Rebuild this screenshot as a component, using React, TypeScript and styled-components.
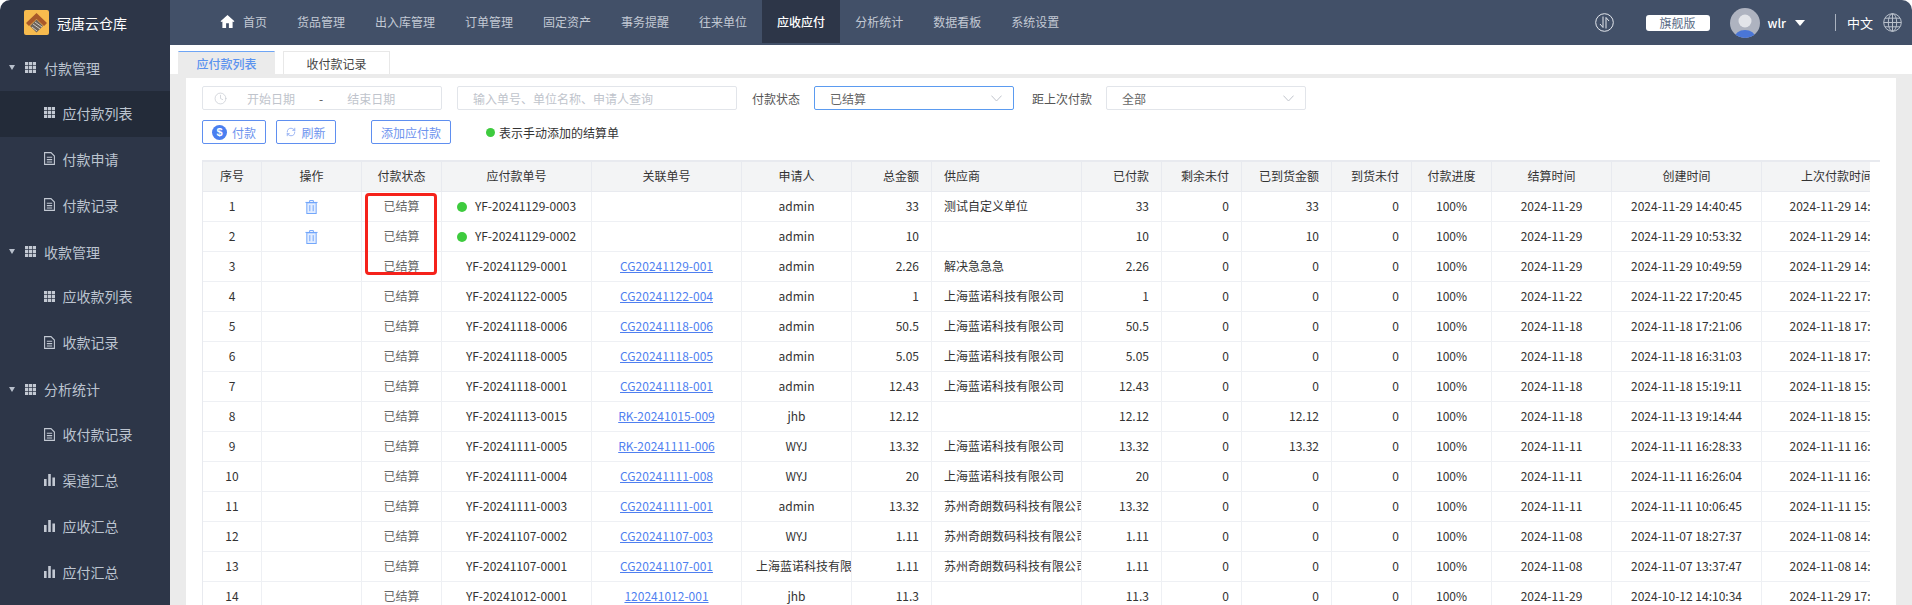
import { Fragment } from 'react'
import { Clock, RefreshCw } from 'lucide-react'
import styled, { createGlobalStyle } from 'styled-components'

const GlobalStyle = createGlobalStyle`
  html, body {
    margin: 0;
    height: 100%;
    background: #fff;
  }
  * {
    box-sizing: border-box;
  }
  body {
    font-family: "Noto Sans CJK SC", "Noto Sans", sans-serif;
    font-size: 12px;
    color: #333;
  }
`

const Trash = () => (
  <svg width="13" height="14" viewBox="0 0 13 15">
    <rect x="1.5" y="3" width="10" height="11.5" fill="#e3edff" stroke="#6aa1fb" />
    <path d="M0 2.6h13M4.5 2.5V.6h4v1.9M4.7 5.5v6.5M8.3 5.5v6.5" stroke="#6aa1fb" fill="none" />
  </svg>
)

const GridIcon = () => (
  <svg width="11" height="11" viewBox="0 0 11 11" fill="#c3c9d3">
    {[0, 3.9, 7.8].map((y) =>
      [0, 3.9, 7.8].map((x) => <rect key={`${x}-${y}`} x={x} y={y} width="3.2" height="3.2" />),
    )}
  </svg>
)

const DocIcon = () => (
  <svg width="11" height="13" viewBox="0 0 11 13" fill="none" stroke="#c3c9d3" strokeWidth="1.1">
    <path d="M.6.6h6.4l3.4 3.4v8.4H.6z" />
    <path d="M2.8 5.2h5.4M2.8 7.6h5.4M2.8 10h5.4" />
  </svg>
)

const BarsIcon = () => (
  <svg width="11" height="12" viewBox="0 0 11 12" fill="#c3c9d3">
    <rect x="0" y="5" width="2.6" height="7" />
    <rect x="4.2" y="0" width="2.6" height="12" />
    <rect x="8.4" y="3.5" width="2.6" height="8.5" />
  </svg>
)

const Logo = () => (
  <svg width="25" height="25" viewBox="0 0 25 25">
    <rect width="25" height="25" rx="2" fill="#f7bb4e" />
    <path d="M12.5 3 23 13l-3 3-7.5-7-7.5 7-3-3z" fill="#a9592a" />
    <path d="M12.5 9.5 19 16l-6.5 6.5L6 16z" fill="#6b625b" />
    <path d="M9 14l7 5M11 12l7 5M8 17l5 4" stroke="#cfc9c2" strokeWidth="1" />
  </svg>
)

const HomeIcon = () => (
  <svg width="15" height="13" viewBox="0 0 15 14" fill="#fff">
    <path d="M7.5 0 15 6.6 13.8 7.6 13 7v7H9V9H6v5H2V7l-.8.6L0 6.6z" />
  </svg>
)

const SwitchIcon = () => (
  <svg width="19" height="19" viewBox="0 0 19 19" fill="none" stroke="#e5e8ee" strokeWidth="1">
    <circle cx="9.5" cy="9.5" r="8.8" />
    <path d="M8 3.5v11M8 14.5 5 11M11 15.5v-11M11 4.5 14 8" />
  </svg>
)

const GlobeIcon = () => (
  <svg width="19" height="19" viewBox="0 0 19 19" fill="none" stroke="#b9c0cb" strokeWidth="1">
    <circle cx="9.5" cy="9.5" r="8.8" />
    <ellipse cx="9.5" cy="9.5" rx="4.2" ry="8.8" />
    <path d="M9.5.7v17.6M.7 9.5h17.6M2 5.2h15M2 13.8h15" />
  </svg>
)

const Avatar = () => (
  <svg width="30" height="30" viewBox="0 0 30 30">
    <clipPath id="avatar-clip">
      <circle cx="15" cy="15" r="15" />
    </clipPath>
    <g clipPath="url(#avatar-clip)">
      <rect width="30" height="30" fill="#aeb3c0" />
      <circle cx="15" cy="13" r="6.5" fill="#e2e4e9" />
      <ellipse cx="15" cy="30" rx="10.5" ry="8" fill="#4a76d6" />
    </g>
  </svg>
)

const SelectArrow = () => (
  <svg width="11" height="7" viewBox="0 0 11 7" fill="none" stroke="#c0c4cc" strokeWidth="1">
    <path d="M.4.6 5.5 6 10.6.6" />
  </svg>
)

type MenuItem = { label: string; icon: 'grid' | 'doc' | 'bars'; active?: boolean }
type MenuGroup = { title: string; items: MenuItem[] }

const menu: MenuGroup[] = [
  {
    title: '付款管理',
    items: [
      { label: '应付款列表', icon: 'grid', active: true },
      { label: '付款申请', icon: 'doc' },
      { label: '付款记录', icon: 'doc' },
    ],
  },
  {
    title: '收款管理',
    items: [
      { label: '应收款列表', icon: 'grid' },
      { label: '收款记录', icon: 'doc' },
    ],
  },
  {
    title: '分析统计',
    items: [
      { label: '收付款记录', icon: 'doc' },
      { label: '渠道汇总', icon: 'bars' },
      { label: '应收汇总', icon: 'bars' },
      { label: '应付汇总', icon: 'bars' },
    ],
  },
]

const navItems = ['货品管理', '出入库管理', '订单管理', '固定资产', '事务提醒', '往来单位', '应收应付', '分析统计', '数据看板', '系统设置']

const columns: { title: string; width: number; align: 'center' | 'right' | 'left' }[] = [
  { title: '序号', width: 59, align: 'center' },
  { title: '操作', width: 100, align: 'center' },
  { title: '付款状态', width: 80, align: 'center' },
  { title: '应付款单号', width: 150, align: 'center' },
  { title: '关联单号', width: 150, align: 'center' },
  { title: '申请人', width: 110, align: 'center' },
  { title: '总金额', width: 80, align: 'right' },
  { title: '供应商', width: 150, align: 'left' },
  { title: '已付款', width: 80, align: 'right' },
  { title: '剩余未付', width: 80, align: 'right' },
  { title: '已到货金额', width: 90, align: 'right' },
  { title: '到货未付', width: 80, align: 'right' },
  { title: '付款进度', width: 80, align: 'center' },
  { title: '结算时间', width: 120, align: 'center' },
  { title: '创建时间', width: 150, align: 'center' },
  { title: '上次付款时间', width: 167, align: 'center' },
]

const SH = '上海蓝诺科技有限公司'
const SZ = '苏州奇朗数码科技有限公司'

type Row = {
  no: string
  manual?: boolean
  link: string
  user: string
  total: string
  vendor: string
  arrived: string
  settle: string
  created: string
  last: string
}

const rows: Row[] = [
  { no: 'YF-20241129-0003', manual: true, link: '', user: 'admin', total: '33', vendor: '测试自定义单位', arrived: '33', settle: '2024-11-29', created: '2024-11-29 14:40:45', last: '2024-11-29 14:40:45' },
  { no: 'YF-20241129-0002', manual: true, link: '', user: 'admin', total: '10', vendor: '', arrived: '10', settle: '2024-11-29', created: '2024-11-29 10:53:32', last: '2024-11-29 14:40:12' },
  { no: 'YF-20241129-0001', link: 'CG20241129-001', user: 'admin', total: '2.26', vendor: '解决急急急', arrived: '0', settle: '2024-11-29', created: '2024-11-29 10:49:59', last: '2024-11-29 14:39:50' },
  { no: 'YF-20241122-0005', link: 'CG20241122-004', user: 'admin', total: '1', vendor: SH, arrived: '0', settle: '2024-11-22', created: '2024-11-22 17:20:45', last: '2024-11-22 17:21:10' },
  { no: 'YF-20241118-0006', link: 'CG20241118-006', user: 'admin', total: '50.5', vendor: SH, arrived: '0', settle: '2024-11-18', created: '2024-11-18 17:21:06', last: '2024-11-18 17:22:01' },
  { no: 'YF-20241118-0005', link: 'CG20241118-005', user: 'admin', total: '5.05', vendor: SH, arrived: '0', settle: '2024-11-18', created: '2024-11-18 16:31:03', last: '2024-11-18 17:05:33' },
  { no: 'YF-20241118-0001', link: 'CG20241118-001', user: 'admin', total: '12.43', vendor: SH, arrived: '0', settle: '2024-11-18', created: '2024-11-18 15:19:11', last: '2024-11-18 15:20:44' },
  { no: 'YF-20241113-0015', link: 'RK-20241015-009', user: 'jhb', total: '12.12', vendor: '', arrived: '12.12', settle: '2024-11-18', created: '2024-11-13 19:14:44', last: '2024-11-18 15:18:27' },
  { no: 'YF-20241111-0005', link: 'RK-20241111-006', user: 'WYJ', total: '13.32', vendor: SH, arrived: '13.32', settle: '2024-11-11', created: '2024-11-11 16:28:33', last: '2024-11-11 16:30:15' },
  { no: 'YF-20241111-0004', link: 'CG20241111-008', user: 'WYJ', total: '20', vendor: SH, arrived: '0', settle: '2024-11-11', created: '2024-11-11 16:26:04', last: '2024-11-11 16:27:40' },
  { no: 'YF-20241111-0003', link: 'CG20241111-001', user: 'admin', total: '13.32', vendor: SZ, arrived: '0', settle: '2024-11-11', created: '2024-11-11 10:06:45', last: '2024-11-11 15:12:09' },
  { no: 'YF-20241107-0002', link: 'CG20241107-003', user: 'WYJ', total: '1.11', vendor: SZ, arrived: '0', settle: '2024-11-08', created: '2024-11-07 18:27:37', last: '2024-11-08 14:02:18' },
  { no: 'YF-20241107-0001', link: 'CG20241107-001', user: SH, total: '1.11', vendor: SZ, arrived: '0', settle: '2024-11-08', created: '2024-11-07 13:37:47', last: '2024-11-08 14:01:55' },
  { no: 'YF-20241012-0001', link: '120241012-001', user: 'jhb', total: '11.3', vendor: '', arrived: '0', settle: '2024-11-29', created: '2024-10-12 14:10:34', last: '2024-11-29 17:03:26' },
]

function MenuIcon({ icon }: { icon: MenuItem['icon'] }) {
  if (icon === 'grid') return <GridIcon />
  if (icon === 'doc') return <DocIcon />
  return <BarsIcon />
}

export default function App() {
  return (
    <Page>
      <GlobalStyle />
      <Sidebar>
        <Brand>
          <Logo />
          <BrandName>冠唐云仓库</BrandName>
        </Brand>
        {menu.map((group) => (
          <Fragment key={group.title}>
            <GroupRow>
              <Caret />
              <GridIcon />
              <span>{group.title}</span>
            </GroupRow>
            {group.items.map((item) => (
              <SubRow key={item.label} $active={item.active}>
                <SubIcon>
                  <MenuIcon icon={item.icon} />
                </SubIcon>
                <span>{item.label}</span>
              </SubRow>
            ))}
          </Fragment>
        ))}
      </Sidebar>
      <Workspace>
        <Header>
          <Nav>
            <NavItem>
              <HomeIcon />
              首页
            </NavItem>
            {navItems.map((label) => (
              <NavItem key={label} $active={label === '应收应付'}>
                {label}
              </NavItem>
            ))}
          </Nav>
          <HeaderRight>
            <SwitchIcon />
            <EditionBadge>旗舰版</EditionBadge>
            <Avatar />
            <UserName>wlr</UserName>
            <UserCaret />
            <HeaderDivider />
            <LangText>中文</LangText>
            <GlobeIcon />
          </HeaderRight>
        </Header>
        <TabBar>
          <Tab $active $width={97}>应付款列表</Tab>
          <Tab $width={107}>收付款记录</Tab>
        </TabBar>
        <Content>
          <Card>
            <FilterRow>
              <DateBox>
                <Clock size={13} color="#c9cdd4" strokeWidth={1.4} />
                <DateStart>开始日期</DateStart>
                <DateDash>-</DateDash>
                <DateEnd>结束日期</DateEnd>
              </DateBox>
              <SearchBox>输入单号、单位名称、申请人查询</SearchBox>
              <FilterLabel>付款状态</FilterLabel>
              <SelectBox $focused>
                已结算
                <SelectArrow />
              </SelectBox>
              <SecondLabel>距上次付款</SecondLabel>
              <SelectBox>
                全部
                <SelectArrow />
              </SelectBox>
            </FilterRow>
            <ActionRow>
              <ActionButton $width={64}>
                <DollarBadge>$</DollarBadge>
                付款
              </ActionButton>
              <ActionButton $width={60}>
                <RefreshCw size={10} color="#7d9ff0" strokeWidth={1.8} />
                刷新
              </ActionButton>
              <AddButton $width={80}>添加应付款</AddButton>
              <Legend>
                <GreenDot />
                表示手动添加的结算单
              </Legend>
            </ActionRow>
            <TableFrame>
              <TableClip>
                <DataTable>
                  <colgroup>
                    {columns.map((col) => (
                      <col key={col.title} width={col.width} />
                    ))}
                  </colgroup>
                  <thead>
                    <tr>
                      {columns.map((col, i) => (
                        <HeadCell key={col.title} $align={col.align} $last={i === columns.length - 1}>
                          {col.title}
                        </HeadCell>
                      ))}
                    </tr>
                  </thead>
                  <tbody>
                    {rows.map((row, i) => (
                      <tr key={row.no}>
                        <Cell $align="center">{i + 1}</Cell>
                        <Cell $align="center">
                          {row.manual && (
                            <TrashWrap>
                              <Trash />
                            </TrashWrap>
                          )}
                        </Cell>
                        <StatusCell $align="center">已结算</StatusCell>
                        <Cell $align="center">
                          {row.manual && <RowDot />}
                          {row.no}
                        </Cell>
                        <Cell $align="center">{row.link && <RefLink href="#">{row.link}</RefLink>}</Cell>
                        <UserCell $align="center">{row.user}</UserCell>
                        <Cell $align="right">{row.total}</Cell>
                        <Cell $align="left">{row.vendor}</Cell>
                        <Cell $align="right">{row.total}</Cell>
                        <Cell $align="right">0</Cell>
                        <Cell $align="right">{row.arrived}</Cell>
                        <Cell $align="right">0</Cell>
                        <Cell $align="center">100%</Cell>
                        <Cell $align="center">{row.settle}</Cell>
                        <Cell $align="center">{row.created}</Cell>
                        <Cell $align="center">{row.last}</Cell>
                      </tr>
                    ))}
                  </tbody>
                </DataTable>
              </TableClip>
              <RedMark />
            </TableFrame>
          </Card>
        </Content>
      </Workspace>
    </Page>
  )
}

const Page = styled.div`
  display: grid;
  grid-template-columns: 170px 1fr;
  height: 100vh;
  overflow: hidden;
  border-radius: 10px 10px 0 0;
`

const Sidebar = styled.aside`
  background: #2d3648;
  color: #bcc4d0;
  font-size: 14px;
  overflow: hidden;
`

const Brand = styled.div`
  display: flex;
  align-items: center;
  gap: 8px;
  height: 45px;
  padding-left: 24px;
`

const BrandName = styled.span`
  color: #fff;
  font-size: 14px;
`

const GroupRow = styled.div`
  display: flex;
  align-items: center;
  height: 45.9px;
  padding-left: 9px;

  svg {
    margin-right: 8px;
  }
`

const Caret = styled.i`
  width: 0;
  height: 0;
  margin-right: 10px;
  border-left: 3.5px solid transparent;
  border-right: 3.5px solid transparent;
  border-top: 5px solid #b8c0cc;
`

const SubRow = styled.div<{ $active?: boolean }>`
  display: flex;
  align-items: center;
  height: 45.9px;
  padding: 0 0 2px 44px;
  background: ${(p) => (p.$active ? '#232b39' : 'transparent')};
`

const SubIcon = styled.span`
  display: flex;
  justify-content: flex-start;
  width: 18.5px;
`

const Workspace = styled.div`
  display: flex;
  flex-direction: column;
  min-width: 0;
`

const Header = styled.header`
  display: flex;
  flex: none;
  align-items: flex-start;
  justify-content: space-between;
  height: 45px;
  background: #425068;
`

const Nav = styled.nav`
  display: flex;
  padding-left: 35px;
`

const NavItem = styled.div<{ $active?: boolean }>`
  display: flex;
  align-items: center;
  gap: 8px;
  height: 43px;
  padding: 0 15px;
  color: ${(p) => (p.$active ? '#fff' : '#c2c9d4')};
  background: ${(p) => (p.$active ? '#2d3648' : 'transparent')};
  font-weight: ${(p) => (p.$active ? 500 : 400)};
`

const HeaderRight = styled.div`
  display: flex;
  align-items: center;
  height: 45px;
  padding-right: 10px;
  color: #fff;
`

const EditionBadge = styled.span`
  display: flex;
  align-items: center;
  justify-content: center;
  width: 64px;
  height: 16px;
  margin: 0 20px 0 32px;
  border-radius: 3px;
  background: #fff;
  color: #5a6b85;
  font-size: 12px;
`

const UserName = styled.span`
  margin-left: 8px;
  font-size: 12px;
  font-weight: 500;
`

const UserCaret = styled.i`
  width: 0;
  height: 0;
  margin-left: 9px;
  border-left: 5px solid transparent;
  border-right: 5px solid transparent;
  border-top: 6px solid #fff;
`

const HeaderDivider = styled.i`
  width: 1px;
  height: 17px;
  margin: 0 11px 0 30px;
  background: #aab2bf;
`

const LangText = styled.span`
  margin-right: 10px;
  font-size: 13px;
`

const TabBar = styled.div`
  display: flex;
  flex: none;
  align-items: flex-end;
  gap: 8px;
  height: 29px;
  padding-left: 8px;
  background: #fff;
`

const Tab = styled.div<{ $active?: boolean; $width: number }>`
  display: flex;
  align-items: center;
  justify-content: center;
  width: ${(p) => p.$width}px;
  height: 23px;
  border: 1px solid ${(p) => (p.$active ? '#ebebeb' : '#e8e8e8')};
  border-top-color: ${(p) => (p.$active ? '#6ea5f5' : '#e8e8e8')};
  border-bottom: none;
  background: ${(p) => (p.$active ? '#ebebeb' : '#fff')};
  color: ${(p) => (p.$active ? '#5b93ef' : '#444')};
  font-weight: ${(p) => (p.$active ? 500 : 400)};
`

const Content = styled.main`
  flex: 1;
  min-height: 0;
  padding: 4px 16px 0;
  background: #ebebeb;
`

const Card = styled.section`
  height: 100%;
  padding: 8px 0 0 16px;
  background: #fff;
`

const FilterRow = styled.div`
  display: flex;
  align-items: center;
  height: 24px;
`

const fieldBorder = '#e2e5ea'

const DateBox = styled.div`
  display: flex;
  align-items: center;
  width: 240px;
  height: 24px;
  padding-left: 11px;
  border: 1px solid ${fieldBorder};
  border-radius: 2px;
  color: #c0c4cc;
`

const DateStart = styled.span`
  margin-left: 20px;
`

const DateDash = styled.span`
  margin-left: 24px;
  color: #555;
`

const DateEnd = styled.span`
  margin-left: 24px;
`

const SearchBox = styled.div`
  display: flex;
  align-items: center;
  width: 280px;
  height: 24px;
  margin-left: 15px;
  padding-left: 15px;
  border: 1px solid ${fieldBorder};
  border-radius: 2px;
  color: #c0c4cc;
`

const FilterLabel = styled.span`
  margin: 0 14px 0 15px;
  color: #555;
`

const SecondLabel = styled(FilterLabel)`
  margin: 0 14px 0 18px;
`

const SelectBox = styled.div<{ $focused?: boolean }>`
  display: flex;
  align-items: center;
  justify-content: space-between;
  width: 200px;
  height: 24px;
  padding: 0 11px 0 15px;
  border: 1px solid ${(p) => (p.$focused ? '#5b9bf0' : fieldBorder)};
  border-radius: 2px;
  color: #666;
`

const ActionRow = styled.div`
  display: flex;
  align-items: center;
  gap: 10px;
  height: 24px;
  margin-top: 10px;
`

const ActionButton = styled.button<{ $width: number }>`
  display: flex;
  align-items: center;
  justify-content: center;
  gap: 5px;
  width: ${(p) => p.$width}px;
  height: 24px;
  padding: 0;
  border: 1px solid #5f8ff0;
  border-radius: 2px;
  background: #fff;
  color: #6d93ee;
  font: inherit;
`

const AddButton = styled(ActionButton)`
  margin-left: 25px;
`

const DollarBadge = styled.span`
  display: flex;
  align-items: center;
  justify-content: center;
  width: 15px;
  height: 15px;
  border-radius: 50%;
  background: #4a7ff0;
  color: #fff;
  font-family: "Liberation Sans", sans-serif;
  font-size: 11px;
  font-weight: 700;
`

const Legend = styled.div`
  display: flex;
  align-items: center;
  gap: 4px;
  margin-left: 25px;
  color: #333;
`

const GreenDot = styled.i`
  width: 9px;
  height: 9px;
  border-radius: 50%;
  background: #3ecb3e;
`

const TableFrame = styled.div`
  position: relative;
  width: 1678px;
  margin-top: 16px;
  border-top: 2px solid #e8eaef;
`

const TableClip = styled.div`
  width: 1668px;
  overflow: hidden;
  border-left: 1px solid #e8eaef;
`

const DataTable = styled.table`
  width: 1726px;
  table-layout: fixed;
  border-collapse: separate;
  border-spacing: 0;
`

type CellProps = { $align: 'center' | 'right' | 'left'; $last?: boolean }

const HeadCell = styled.th<CellProps>`
  height: 30px;
  padding: 0 ${(p) => (p.$last ? '16px' : p.$align === 'center' ? '0' : '12px')} 2px ${(p) => (p.$align === 'center' ? '0' : '12px')};
  overflow: hidden;
  border-right: 1px solid #e8eaef;
  border-bottom: 1px solid #e8eaef;
  background: #f3f4f5;
  color: #333;
  font-weight: 400;
  font-size: 12px;
  line-height: 16px;
  text-align: ${(p) => p.$align};
  white-space: nowrap;
`

const Cell = styled.td<CellProps>`
  height: 30px;
  padding: 0 ${(p) => (p.$align === 'center' ? '0' : '12px')} 2px;
  overflow: hidden;
  border-right: 1px solid #eef0f4;
  border-bottom: 1px solid #eef0f4;
  color: #333;
  font-size: 12px;
  line-height: 16px;
  text-align: ${(p) => p.$align};
  white-space: nowrap;

  tr:last-child > & {
    border-bottom: none;
  }
`

const StatusCell = styled(Cell)`
  color: #666;
`

const UserCell = styled(Cell)`
  padding-left: 14px;
  padding-right: 14px;
`

const TrashWrap = styled.span`
  display: inline-flex;
  margin-top: 2px;
  vertical-align: middle;
`

const RowDot = styled.i`
  display: inline-block;
  width: 10px;
  height: 10px;
  margin-right: 8px;
  border-radius: 50%;
  background: #3ecb3e;
  vertical-align: -1px;
`

const RefLink = styled.a`
  color: #4f7ff0;
  text-decoration: underline;
`

const RedMark = styled.div`
  position: absolute;
  top: 31px;
  left: 163px;
  width: 72px;
  height: 82px;
  border: 3px solid #f5221b;
  border-radius: 4px;
  pointer-events: none;
`
